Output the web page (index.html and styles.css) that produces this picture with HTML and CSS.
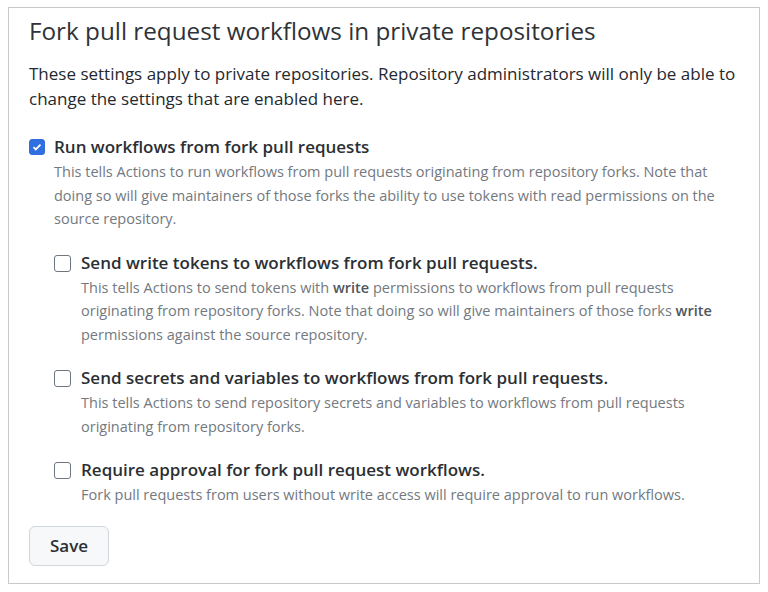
FILE: index.html
```html
<!DOCTYPE html>
<html lang="en">
<head>
    <meta charset="UTF-8">
    <meta name="viewport" content="width=device-width, initial-scale=1.0">
    <title>Fork pull request workflows</title>
    <link rel="stylesheet" href="styles.css">
</head>
<body>
    <form class="panel">
        <h2 class="title">Fork pull request workflows in private repositories</h2>
        <p class="intro">These settings apply to private repositories. Repository administrators will only be able to change the settings that are enabled here.</p>

        <div class="option">
            <input type="checkbox" id="runWorkflows" class="check" checked>
            <div class="option-body">
                <label for="runWorkflows" class="option-label">Run workflows from fork pull requests</label>
                <p class="option-note">This tells Actions to run workflows from pull requests originating from repository forks. Note that doing so will give maintainers of those forks the ability to use tokens with read permissions on the source repository.</p>

                <div class="option nested">
                    <input type="checkbox" id="writeTokens" class="check">
                    <div class="option-body">
                        <label for="writeTokens" class="option-label">Send write tokens to workflows from fork pull requests.</label>
                        <p class="option-note">This tells Actions to send tokens with <strong>write</strong> permissions to workflows from pull requests originating from repository forks. Note that doing so will give maintainers of those forks <strong>write</strong> permissions against the source repository.</p>
                    </div>
                </div>

                <div class="option nested">
                    <input type="checkbox" id="sendSecrets" class="check">
                    <div class="option-body">
                        <label for="sendSecrets" class="option-label">Send secrets and variables to workflows from fork pull requests.</label>
                        <p class="option-note">This tells Actions to send repository secrets and variables to workflows from pull requests originating from repository forks.</p>
                    </div>
                </div>

                <div class="option nested">
                    <input type="checkbox" id="requireApproval" class="check">
                    <div class="option-body">
                        <label for="requireApproval" class="option-label">Require approval for fork pull request workflows.</label>
                        <p class="option-note">Fork pull requests from users without write access will require approval to run workflows.</p>
                    </div>
                </div>
            </div>
        </div>

        <button type="button" class="save">Save</button>
    </form>
</body>
</html>
```

FILE: styles.css
```css
body {
    margin: 0;
    padding: 7px 8px 8px 8px;
    font-family: "Open Sans", "Noto Sans", sans-serif;
    color: #1f2328;
    background: #fff;
}
.panel {
    border: 1px solid #c9c9c9;
    padding: 6px 20px 16px 20px;
    height: 577px;
    box-sizing: border-box;
}
.title {
    margin: 0 0 13px 0;
    font-size: 24.25px;
    font-weight: 400;
    line-height: 34px;
    color: #2f3337;
}
.intro {
    margin: 0 0 23px 0;
    font-size: 17px;
    line-height: 25px;
    color: #24292f;
}
.option {
    display: flex;
    gap: 9px;
}
.option.nested {
    margin-top: 19px;
}
.nested .check {
    width: 17px;
    height: 17px;
}
.nested .option-body {
    margin-left: 1px;
}
.check {
    appearance: none;
    flex: none;
    width: 16px;
    height: 16px;
    margin: 5px 0 0 0;
    border: 1px solid #6e7781;
    border-radius: 3px;
    background: #fff;
}
.check:checked {
    border-color: #2f6fdf;
    background: #2f6fdf url("data:image/svg+xml,%3Csvg xmlns='http://www.w3.org/2000/svg' viewBox='0 0 16 16'%3E%3Cpath d='M4 8.2l2.6 2.6L12 5.3' fill='none' stroke='%23fff' stroke-width='2'/%3E%3C/svg%3E") center/14px no-repeat;
}
.option-label {
    display: block;
    font-size: 17px;
    font-weight: 600;
    line-height: 26px;
    color: #2b2f33;
}
.option-note {
    margin: 0;
    font-size: 14.5px;
    line-height: 23.5px;
    color: #73797f;
}
.option-note strong {
    font-weight: 600;
    color: #50565c;
}
.save {
    margin-top: 19px;
    padding: 0 20px;
    height: 40px;
    font-family: inherit;
    font-size: 17px;
    font-weight: 600;
    color: #2b2f33;
    background: #f6f8fa;
    border: 1px solid #d0d7de;
    border-radius: 6px;
}
```
